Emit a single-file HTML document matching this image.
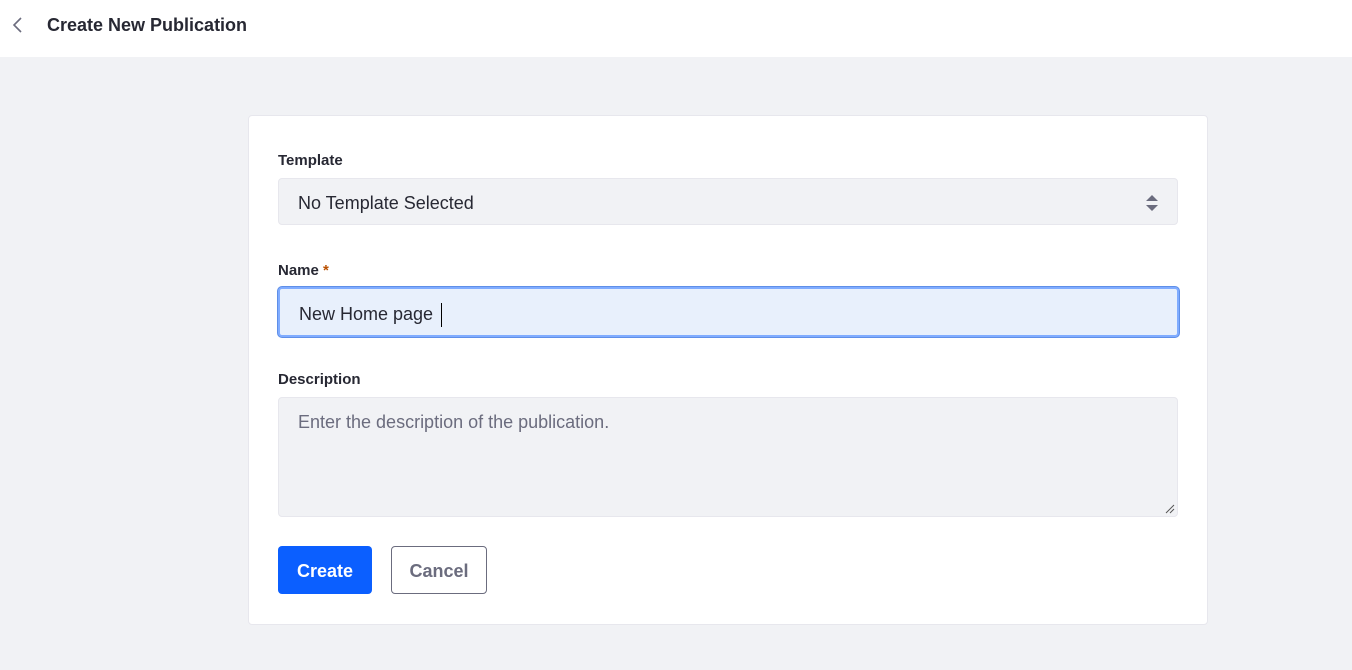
<!DOCTYPE html>
<html><head><style>
body{margin:0;width:1352px;height:670px;background:#f1f2f5;font-family:"Liberation Sans",sans-serif;color:#272833;position:relative;overflow:hidden}
.top{position:absolute;left:0;top:0;width:1352px;height:57px;background:#fff}
.top .t{position:absolute;left:47px;top:15px;font-size:18px;font-weight:bold}
.card{position:absolute;left:248px;top:115px;width:958px;height:508px;background:#fff;border:1px solid #e7e7ed;border-radius:4px}
.lbl{position:absolute;left:278px;font-size:15px;font-weight:bold;color:#272833}
.inp{position:absolute;left:278px;width:900px;background:#f1f2f5;border:1px solid #e7e7ed;border-radius:4px;box-sizing:border-box;font-size:18px;padding-left:19px}
.btn{position:absolute;top:546px;height:48px;border-radius:4px;box-sizing:border-box;font-size:18px;font-weight:bold;text-align:center;line-height:50px}
</style></head><body>
<div class="top">
<svg style="position:absolute;left:11px;top:16px" width="14" height="18" viewBox="0 0 14 18"><path d="M10 2 L3 9 L10 16" fill="none" stroke="#6b6c7e" stroke-width="1.6"/></svg>
<div class="t">Create New Publication</div></div>
<div class="card"></div>
<div class="lbl" style="top:152px">Template</div>
<div class="inp" style="top:178px;height:47px;line-height:49px">No Template Selected
<svg style="position:absolute;right:19px;top:16px" width="12" height="16" viewBox="0 0 12 16"><path d="M6 0 L12 6 H0Z M0 10 H12 L6 16Z" fill="#6b6c7e"/></svg></div>
<div class="lbl" style="top:262px">Name <span style="color:#b95000">*</span></div>
<div class="inp" style="top:287px;height:50px;line-height:51px;background:#e8f0fc;border:2px solid #80acff;box-shadow:0 0 0 1px #5f8fe8;left:278px;width:901px">New Home page <span style="display:inline-block;width:1px;height:24px;background:#000;vertical-align:middle;margin-left:3px"></span></div>
<div class="lbl" style="top:371px">Description</div>
<div class="inp" style="top:397px;height:120px;padding-top:14px;color:#6b6c7e">Enter the description of the publication.
<svg style="position:absolute;right:2px;bottom:2px" width="10" height="10" viewBox="0 0 10 10"><path d="M9 1 L1 9 M9 5 L5 9" stroke="#555" stroke-width="1"/></svg></div>
<div class="btn" style="left:278px;width:94px;background:#0b5fff;color:#fff">Create</div>
<div class="btn" style="left:391px;width:96px;border:1px solid #6b6c7e;color:#6b6c7e;line-height:48px;background:#fff">Cancel</div>
</body></html>
